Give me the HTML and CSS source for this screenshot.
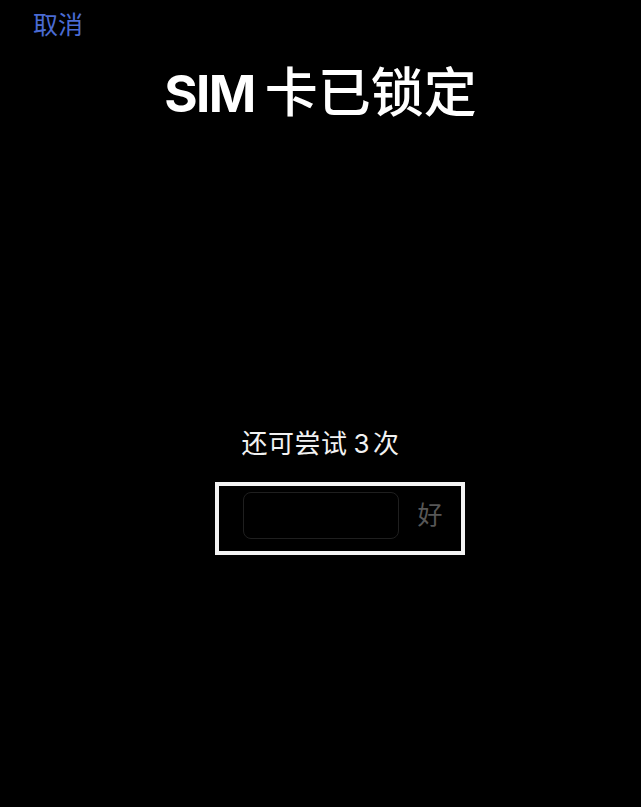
FILE: index.html
```html
<!DOCTYPE html>
<html lang="zh-CN">
<head>
<meta charset="utf-8">
<title>SIM 卡已锁定</title>
<link rel="stylesheet" href="styles.css">
</head>
<body>
<div class="screen">
  <div class="topbar"><span class="cancel">取消</span></div>
  <h1 class="title"><span class="title-latin">SIM</span><span class="title-cjk">卡已锁定</span></h1>
  <div class="hint">还可尝试<span class="num">3</span>次</div>
  <div class="entry">
    <div class="pin-field"></div>
    <span class="ok">好</span>
    <div class="mark"></div>
  </div>
</div>
</body>
</html>
```
FILE: styles.css
```css
html, body {
  margin: 0;
  padding: 0;
  background: #000;
}
.screen {
  width: 641px;
  height: 807px;
  background: #000;
  color: #fff;
  font-family: Inter, "Noto Sans CJK SC", sans-serif;
  display: flex;
  flex-direction: column;
  overflow: hidden;
}
.topbar {
  padding: 12px 0 0 33px;
  height: 26px;
}
.cancel {
  font-size: 25px;
  line-height: 26px;
  color: #4a6bd3;
}
.title {
  margin: 30px 0 0;
  font-size: 51px;
  line-height: 51px;
  font-weight: 700;
  text-align: center;
  color: #fff;
}
.title-latin {
  letter-spacing: -1.5px;
}
.title-cjk {
  margin-left: 10px;
  font-size: 53px;
  font-weight: 500;
}
.hint {
  margin-top: 312px;
  font-size: 26px;
  line-height: 26px;
  letter-spacing: 0.5px;
  text-align: center;
  color: #f2f2f2;
}
.num {
  margin: 0 3px 0 6px;
}
.entry {
  position: relative;
  width: 156px;
  margin: 35px auto 0;
}
.pin-field {
  box-sizing: border-box;
  width: 156px;
  height: 47px;
  border: 1.5px solid #1f1f1f;
  border-radius: 8px;
  background: #000;
}
.ok {
  position: absolute;
  left: calc(100% + 19px);
  top: 10px;
  font-size: 25px;
  line-height: 26px;
  color: #575757;
}
.mark {
  position: absolute;
  left: -28px;
  top: -10px;
  width: 250px;
  height: 73px;
  box-sizing: border-box;
  border: 4px solid #f4f4f4;
}
```
